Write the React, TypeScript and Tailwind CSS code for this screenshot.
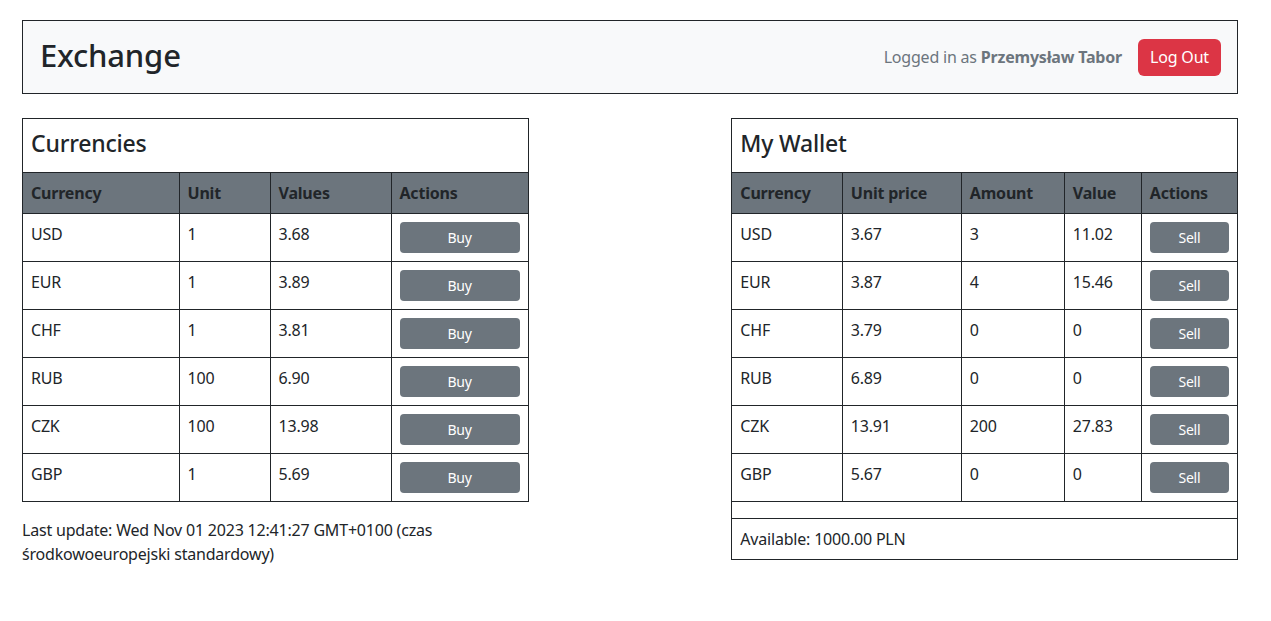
const rates = [
  { code: "USD", unit: "1", value: "3.68" },
  { code: "EUR", unit: "1", value: "3.89" },
  { code: "CHF", unit: "1", value: "3.81" },
  { code: "RUB", unit: "100", value: "6.90" },
  { code: "CZK", unit: "100", value: "13.98" },
  { code: "GBP", unit: "1", value: "5.69" },
];

const wallet = [
  { code: "USD", price: "3.67", amount: "3", value: "11.02" },
  { code: "EUR", price: "3.87", amount: "4", value: "15.46" },
  { code: "CHF", price: "3.79", amount: "0", value: "0" },
  { code: "RUB", price: "6.89", amount: "0", value: "0" },
  { code: "CZK", price: "13.91", amount: "200", value: "27.83" },
  { code: "GBP", price: "5.67", amount: "0", value: "0" },
];

const th = "border-r border-b border-[#212529] bg-[#6c757d] px-2 py-2 text-left align-top font-bold leading-6";
const td = "border-r border-b border-[#212529] px-2 py-2 align-top leading-6";
const btn = "h-[31px] w-full rounded-[4px] bg-[#6c757d] text-[14px] text-white";

export default function App() {
  return (
    <div className="min-h-screen bg-white pl-[22px] pr-[33px] pt-5 font-['Segoe_UI','Noto_Sans',sans-serif] text-[16px] tracking-[-0.2px] text-[#212529]">
      {/* Top bar */}
      <header className="flex h-[74px] items-center justify-between border border-[#212529] bg-[#f8f9fa] pl-[17px] pr-4">
        <h1 className="pb-1 text-[31px] font-medium leading-none">Exchange</h1>
        <div className="flex items-center">
          <span className="text-[#6c757d]">
            Logged in as <span className="font-bold">Przemysław Tabor</span>
          </span>
          <button className="ml-4 h-[37px] w-[83px] rounded-md bg-[#dc3545] text-white">Log Out</button>
        </div>
      </header>

      <div className="mt-6 grid grid-cols-12 items-start">
        {/* Rates */}
        <div className="col-span-5">
          <div className="border border-b-0 border-[#212529]">
            <h2 className="flex h-[54px] items-center border-b border-[#212529] px-2 pb-1 text-[23px] font-medium">Currencies</h2>
            <table className="w-full table-fixed border-collapse">
              <thead>
                <tr>
                  <th className={`${th} w-[156px]`}>Currency</th>
                  <th className={`${th} w-[91px]`}>Unit</th>
                  <th className={`${th} w-[121px]`}>Values</th>
                  <th className={`${th} border-r-0`}>Actions</th>
                </tr>
              </thead>
              <tbody>
                {rates.map((r) => (
                  <tr key={r.code}>
                    <td className={td}>{r.code}</td>
                    <td className={td}>{r.unit}</td>
                    <td className={td}>{r.value}</td>
                    <td className={`${td} border-r-0`}>
                      <button className={btn}>Buy</button>
                    </td>
                  </tr>
                ))}
              </tbody>
            </table>
          </div>
          <p className="mt-4 leading-6">
            Last update: Wed Nov 01 2023 12:41:27 GMT+0100 (czas środkowoeuropejski standardowy)
          </p>
        </div>

        {/* Wallet */}
        <div className="col-span-5 col-start-8 border border-b-0 border-[#212529]">
          <h2 className="flex h-[54px] items-center border-b border-[#212529] px-2 pb-1 text-[23px] font-medium">My Wallet</h2>
          <table className="w-full table-fixed border-collapse">
            <thead>
              <tr>
                <th className={`${th} w-[110px]`}>Currency</th>
                <th className={`${th} w-[119px]`}>Unit price</th>
                <th className={`${th} w-[103px]`}>Amount</th>
                <th className={`${th} w-[77px]`}>Value</th>
                <th className={`${th} border-r-0`}>Actions</th>
              </tr>
            </thead>
            <tbody>
              {wallet.map((w) => (
                <tr key={w.code}>
                  <td className={td}>{w.code}</td>
                  <td className={td}>{w.price}</td>
                  <td className={td}>{w.amount}</td>
                  <td className={td}>{w.value}</td>
                  <td className={`${td} border-r-0`}>
                    <button className={btn}>Sell</button>
                  </td>
                </tr>
              ))}
            </tbody>
          </table>
          <div className="h-[17px] border-b border-[#212529]" />
          <div className="border-b border-[#212529] px-2 py-2 leading-6">Available: 1000.00 PLN</div>
        </div>
      </div>
    </div>
  );
}
